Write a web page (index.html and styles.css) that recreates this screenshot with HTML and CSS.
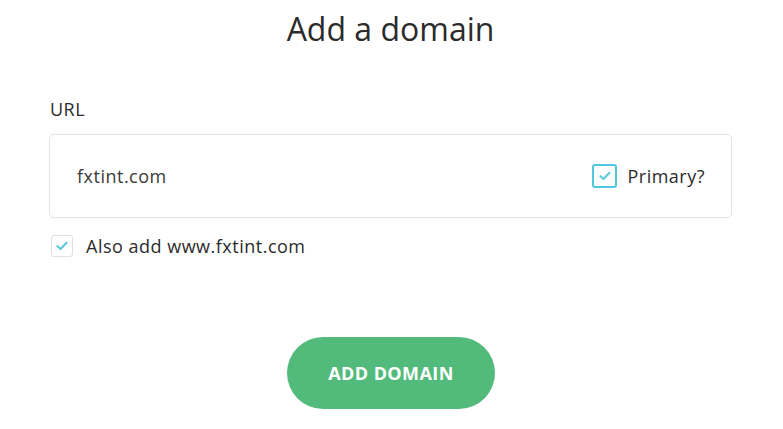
FILE: index.html
```html
<!DOCTYPE html>
<html>
<head>
<meta charset="utf-8">
<link rel="stylesheet" href="styles.css">
</head>
<body>
<div class="page">
  <h1 class="title">Add a domain</h1>
  <label class="label">URL</label>
  <div class="field">
    <span class="value">fxtint.com</span>
    <span class="primary">
      <span class="box box-primary"><svg width="12" height="10" viewBox="0 0 12 10"><path d="M1.5 5.2 L4.5 8 L10.5 1.8" fill="none" stroke="#5ccbe0" stroke-width="2.2" stroke-linecap="round" stroke-linejoin="round"/></svg></span>
      <span class="primary-text">Primary?</span>
    </span>
  </div>
  <div class="also">
    <span class="box box-small"><svg width="12" height="10" viewBox="0 0 12 10"><path d="M1.5 5.2 L4.5 8 L10.5 1.8" fill="none" stroke="#5ccbe0" stroke-width="2.2" stroke-linecap="round" stroke-linejoin="round"/></svg></span>
    <span class="also-text">Also add www.fxtint.com</span>
  </div>
  <div class="actions">
    <button class="btn">ADD DOMAIN</button>
  </div>
</div>
</body>
</html>
```
FILE: styles.css
```css
html, body {
  margin: 0;
  padding: 0;
  background: #ffffff;
}
body {
  font-family: "Open Sans", Lato, sans-serif;
  color: #2b2b2b;
}
.page {
  width: 683px;
  margin-left: 49px;
  display: flex;
  flex-direction: column;
}
.title {
  margin: 9px 0 0 0;
  text-align: center;
  font-size: 32px;
  font-weight: 400;
  line-height: 40px;
  color: #2b2b2b;
}
.label {
  margin-top: 49px;
  margin-left: 1px;
  font-size: 18px;
  line-height: 22px;
  letter-spacing: 0.5px;
}
.field {
  margin-top: 14px;
  height: 82px;
  border: 1px solid #e3e3e3;
  border-radius: 5px;
  display: flex;
  align-items: center;
  justify-content: space-between;
  padding: 0 26px 0 27px;
}
.value {
  font-size: 18px;
  letter-spacing: 0.5px;
  color: #3a3a3a;
}
.primary {
  display: flex;
  align-items: center;
  gap: 10px;
}
.box {
  display: flex;
  align-items: center;
  justify-content: center;
  box-sizing: border-box;
}
.box-primary {
  width: 25px;
  height: 24px;
  border: 2px solid #4fc7dd;
  border-radius: 3px;
}
.primary-text {
  font-size: 18px;
  letter-spacing: 0.5px;
  color: #2b2b2b;
}
.also {
  margin-top: 16px;
  margin-left: 2px;
  display: flex;
  align-items: center;
  gap: 13px;
}
.box-small {
  width: 22px;
  height: 22px;
  border: 1px solid #e0e0e0;
  border-radius: 3px;
}
.also-text {
  font-size: 18px;
  letter-spacing: 0.5px;
  color: #2b2b2b;
}
.actions {
  margin-top: 79px;
  display: flex;
  justify-content: center;
}
.btn {
  width: 208px;
  height: 72px;
  border: none;
  border-radius: 36px;
  background: #52bb7b;
  color: #ffffff;
  font-family: "Open Sans", Lato, sans-serif;
  font-weight: 700;
  font-size: 18px;
  letter-spacing: 0.4px;
  margin-left: 1px;
}
```
